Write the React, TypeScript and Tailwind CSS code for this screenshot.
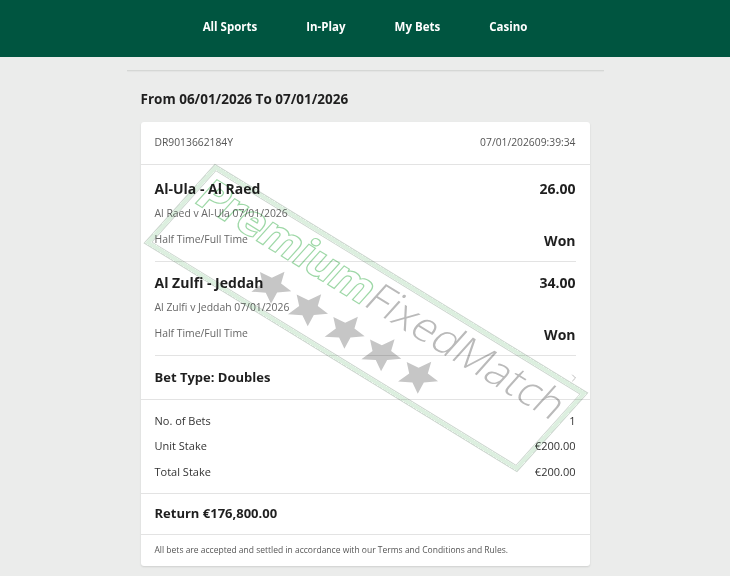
import { ChevronRight } from "lucide-react";

const selections = [
  { title: "Al-Ula - Al Raed", odds: "26.00", event: "Al Raed v Al-Ula 07/01/2026", market: "Half Time/Full Time", result: "Won" },
  { title: "Al Zulfi - Jeddah", odds: "34.00", event: "Al Zulfi v Jeddah 07/01/2026", market: "Half Time/Full Time", result: "Won" },
];

const stakes = [
  ["No. of Bets", "1"],
  ["Unit Stake", "€200.00"],
  ["Total Stake", "€200.00"],
];

const Star = () => (
  <svg width="42" height="42" viewBox="0 0 24 24">
    <path d="M12 1.5l3.1 6.9 7.4.7-5.6 5 1.7 7.4L12 17.6l-6.6 3.9 1.7-7.4-5.6-5 7.4-.7z" fill="#c6c6c6" />
  </svg>
);

// watermark stamped over the slip
const Watermark = () => (
  <div className="absolute left-[215px] top-[165px] w-[436px] h-[105px] origin-top-left [transform:matrix(0.853,0.523,-0.667,0.743,0,0)] pointer-events-none mix-blend-multiply">
    <div className="w-full h-full border-[4px] border-[#dcefdf] shadow-[0_0_0_1px_#cdd6cf,inset_0_0_0_1px_#cdd6cf]">
      <div className="flex items-baseline pl-[4px] text-[43px] leading-[46px]">
        <span className="font-bold text-white [-webkit-text-stroke:2.5px_#9ed8a7] [paint-order:stroke_fill]">Premium</span>
        <span className="font-light text-[#bababa]">FixedMatch</span>
      </div>
      <div className="flex ml-[100px] mt-[3px] gap-[1px]">
        <Star />
        <Star />
        <Star />
        <Star />
        <Star />
      </div>
    </div>
  </div>
);

export default function App() {
  return (
    <div className="relative min-h-[576px] bg-[#ebeceb] font-['Open_Sans',sans-serif] text-[#1f1f1f] overflow-hidden">
      <header className="h-[57px] bg-[#005540] flex items-center justify-center gap-[49px] text-white text-[11.5px] font-bold pb-[3px]">
        <span>All Sports</span>
        <span>In-Play</span>
        <span>My Bets</span>
        <span>Casino</span>
      </header>

      <div className="w-[477px] mx-auto mt-[13px]">
        <div className="h-px bg-[#d5d7d5] shadow-[0_1px_1px_rgba(0,0,0,0.04)]" />
        <h2 className="pt-[19px] pb-[13px] pl-[14px] leading-[19px] text-[13.5px] font-bold">From 06/01/2026 To 07/01/2026</h2>

        <div className="mx-[14px] bg-white rounded-[3px] shadow-[0_1px_2px_rgba(0,0,0,0.12)]">
          <div className="h-[43px] px-[14px] flex items-center justify-between text-[10.3px] text-[#555] border-b border-[#e3e3e3]">
            <span>DR9013662184Y</span>
            <span>07/01/202609:39:34</span>
          </div>

          {selections.map((s, i) => (
            <div key={s.title} className={i === 0 ? "px-[14px] pt-[10px]" : "px-[14px] pt-[7px]"}>
              <div className="h-[26px] flex items-center justify-between text-[14px] font-bold">
                <span>{s.title}</span>
                <span>{s.odds}</span>
              </div>
              <div className="h-[26px] flex items-center text-[10.4px] text-[#666]">{s.event}</div>
              <div className="h-[26px] flex items-center justify-between">
                <span className="text-[10.4px] text-[#666]">{s.market}</span>
                <span className="text-[14px] font-bold">{s.result}</span>
              </div>
              <div className="pb-[8px] border-b border-[#e3e3e3]" />
            </div>
          ))}

          <div className="h-[44px] px-[14px] flex items-center justify-between border-b border-[#e3e3e3]">
            <span className="text-[13px] font-bold">Bet Type: Doubles</span>
            <ChevronRight size={12} strokeWidth={1.3} className="text-[#999] -mr-[4px]" />
          </div>

          <div className="px-[14px] pt-[8px] pb-[8px] border-b border-[#e3e3e3]">
            {stakes.map(([label, value]) => (
              <div key={label} className="h-[25.5px] flex items-center justify-between text-[11px] text-[#333]">
                <span>{label}</span>
                <span>{value}</span>
              </div>
            ))}
          </div>

          <div className="h-[41px] px-[14px] flex items-center text-[13px] font-bold border-b border-[#e3e3e3]">
            Return €176,800.00
          </div>

          <div className="h-[31px] px-[14px] flex items-center text-[8.5px] text-[#555]">
            All bets are accepted and settled in accordance with our Terms and Conditions and Rules.
          </div>
        </div>
      </div>

      <Watermark />
    </div>
  );
}
